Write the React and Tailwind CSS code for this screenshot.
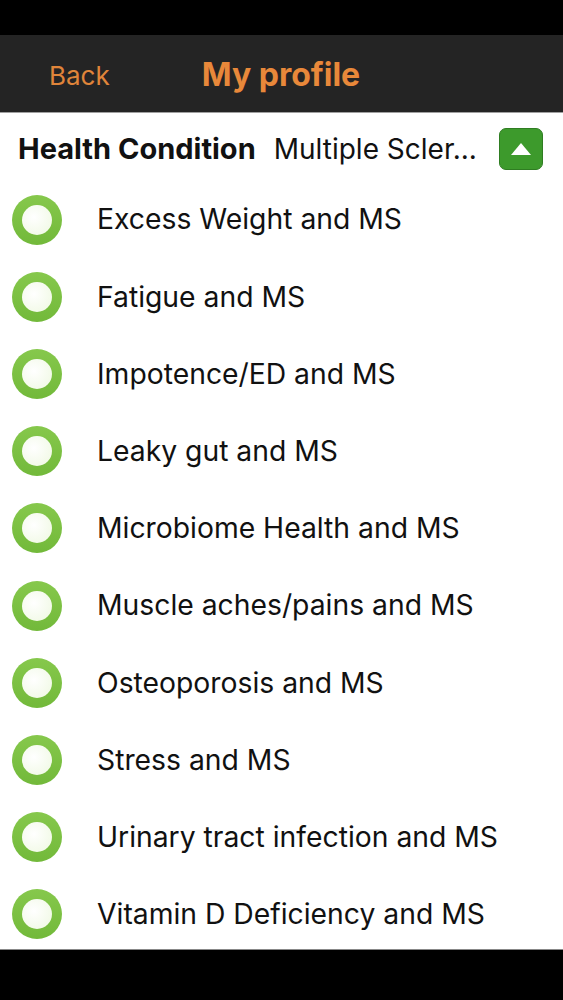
import React from 'react';

const topics = [
  'Excess Weight and MS',
  'Fatigue and MS',
  'Impotence/ED and MS',
  'Leaky gut and MS',
  'Microbiome Health and MS',
  'Muscle aches/pains and MS',
  'Osteoporosis and MS',
  'Stress and MS',
  'Urinary tract infection and MS',
  'Vitamin D Deficiency and MS',
];

const RadioRing = () => (
  <div className="w-[50px] h-[50px] rounded-full bg-[linear-gradient(#86c84c,#72b93a)] flex items-center justify-center shrink-0">
    <div className="w-[30px] h-[30px] rounded-full bg-[radial-gradient(circle_at_40%_40%,#ffffff,#eef8e0)]" />
  </div>
);

const App = () => {
  return (
    <div className="w-[563px] h-[1000px] bg-black flex flex-col overflow-hidden" style={{ fontFamily: 'Inter, "Liberation Sans", sans-serif' }}>
      <div className="h-[35px] shrink-0" />

      {/* Nav bar */}
      <div className="h-[78px] shrink-0 bg-[#242424] border-b border-[#a0a0a0] flex items-center pt-[3px]">
        <span className="ml-[49px] text-[26px] text-[#e0853a]">Back</span>
        <span className="ml-[92px] text-[32px] font-bold text-[#e8883a]">My profile</span>
      </div>

      {/* Content */}
      <div className="h-[836px] shrink-0 bg-white overflow-hidden">
        <div className="h-[67px] flex items-center pl-[18px] pr-[20px] pt-[5px]">
          <span className="text-[29px] font-bold text-[#111]">Health Condition</span>
          <span className="ml-[18px] text-[28px] text-[#111] flex-1">Multiple Scler...</span>
          <button className="w-[44px] h-[42px] rounded-[7px] bg-[#3d9a2c] border border-[#2f7d22] flex items-center justify-center">
            <svg width="20" height="12" viewBox="0 0 20 12">
              <polygon points="10,0 20,12 0,12" fill="#fff" />
            </svg>
          </button>
        </div>

        {topics.map(t => (
          <div key={t} className="h-[77.2px] flex items-center pl-[12px] pt-[2px]">
            <RadioRing />
            <span className="ml-[35px] text-[28.3px] text-[#111]">{t}</span>
          </div>
        ))}
      </div>

      <div className="flex-1 bg-black border-t border-[#888]" />
    </div>
  );
};

export default App;
